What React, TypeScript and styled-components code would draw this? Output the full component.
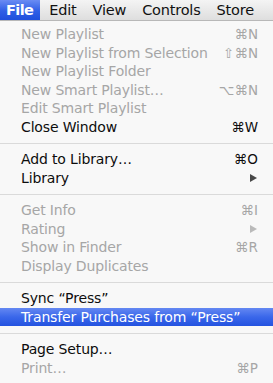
import styled, { createGlobalStyle, css } from 'styled-components';

type Item =
  | { sep: true }
  | { sep?: false; label: string; shortcut?: string; disabled?: boolean; submenu?: boolean; active?: boolean };

const items: Item[] = [
  { label: 'New Playlist', shortcut: '⌘N', disabled: true },
  { label: 'New Playlist from Selection', shortcut: '⇧⌘N', disabled: true },
  { label: 'New Playlist Folder', disabled: true },
  { label: 'New Smart Playlist…', shortcut: '⌥⌘N', disabled: true },
  { label: 'Edit Smart Playlist', disabled: true },
  { label: 'Close Window', shortcut: '⌘W' },
  { sep: true },
  { label: 'Add to Library…', shortcut: '⌘O' },
  { label: 'Library', submenu: true },
  { sep: true },
  { label: 'Get Info', shortcut: '⌘I', disabled: true },
  { label: 'Rating', submenu: true, disabled: true },
  { label: 'Show in Finder', shortcut: '⌘R', disabled: true },
  { label: 'Display Duplicates', disabled: true },
  { sep: true },
  { label: 'Sync “Press”' },
  { label: 'Transfer Purchases from “Press”', active: true },
  { sep: true },
  { label: 'Page Setup…' },
  { label: 'Print…', shortcut: '⌘P', disabled: true },
];

const menus = ['File', 'Edit', 'View', 'Controls', 'Store'];

function App() {
  return (
    <>
      <GlobalStyle />
      <Screen>
        <MenuBar>
          {menus.map((m, i) => (
            <MenuTitle key={m} $open={i === 0}>
              {m}
            </MenuTitle>
          ))}
        </MenuBar>
        <Menu>
          {items.map((it, i) =>
            it.sep ? (
              <Separator key={i} />
            ) : (
              <Row key={i} $disabled={it.disabled} $active={it.active}>
                <Label>{it.label}</Label>
                {it.shortcut && <Shortcut>{it.shortcut}</Shortcut>}
                {it.submenu && <Arrow />}
              </Row>
            )
          )}
        </Menu>
      </Screen>
    </>
  );
}

export default App;

const GlobalStyle = createGlobalStyle`
  html, body {
    margin: 0;
    padding: 0;
    background: #f6f6f6;
    overflow: hidden;
  }
`;

const Screen = styled.div`
  width: 273px;
  height: 383px;
  display: flex;
  flex-direction: column;
  overflow: hidden;
  font-family: 'DejaVu Sans', 'Verdana', sans-serif;
`;

const MenuBar = styled.div`
  height: 21px;
  flex-shrink: 0;
  display: flex;
  align-items: stretch;
  background: linear-gradient(#f4f4f4, #dedede);
  border-bottom: 1px solid #b8b8b8;
  box-sizing: border-box;
`;

const MenuTitle = styled.div<{ $open?: boolean }>`
  display: flex;
  align-items: center;
  padding: 0 8px;
  font-size: 14.5px;
  letter-spacing: -0.2px;
  color: #111;
  ${(p) =>
    p.$open &&
    css`
      padding: 0 7px 0 6px;
      margin-right: 1px;
      color: #fff;
      font-weight: bold;
      letter-spacing: -0.6px;
      background: linear-gradient(#6a8cf3, #2f5fe6 55%, #1f4fdc);
    `}
`;

const Menu = styled.div`
  flex: 1;
  padding-top: 4px;
  background: #f8f8f8;
  display: flex;
  flex-direction: column;
`;

const Row = styled.div<{ $disabled?: boolean; $active?: boolean }>`
  height: 18.5px;
  flex-shrink: 0;
  display: flex;
  align-items: center;
  padding: 0 15px 0 21px;
  font-size: 14px;
  letter-spacing: -0.15px;
  color: ${(p) => (p.$disabled ? '#a6a6a6' : '#0d0d0d')};
  ${(p) =>
    p.$active &&
    css`
      color: #fff;
      background: linear-gradient(#6488f2, #3a67ea 50%, #2453e0);
    `}
`;

const Label = styled.span`
  flex: 1;
  white-space: nowrap;
`;

const Shortcut = styled.span`
  font-size: 13.5px;
  letter-spacing: 0;
  white-space: nowrap;
`;

const Arrow = styled.span`
  width: 0;
  height: 0;
  margin-right: 1px;
  border-top: 4.5px solid transparent;
  border-bottom: 4.5px solid transparent;
  border-left: 7px solid currentColor;
  opacity: 0.75;
`;

const Separator = styled.div`
  height: 14px;
  flex-shrink: 0;
  display: flex;
  align-items: center;
  &::after {
    content: '';
    flex: 1;
    height: 1px;
    background: #dadada;
  }
`;
